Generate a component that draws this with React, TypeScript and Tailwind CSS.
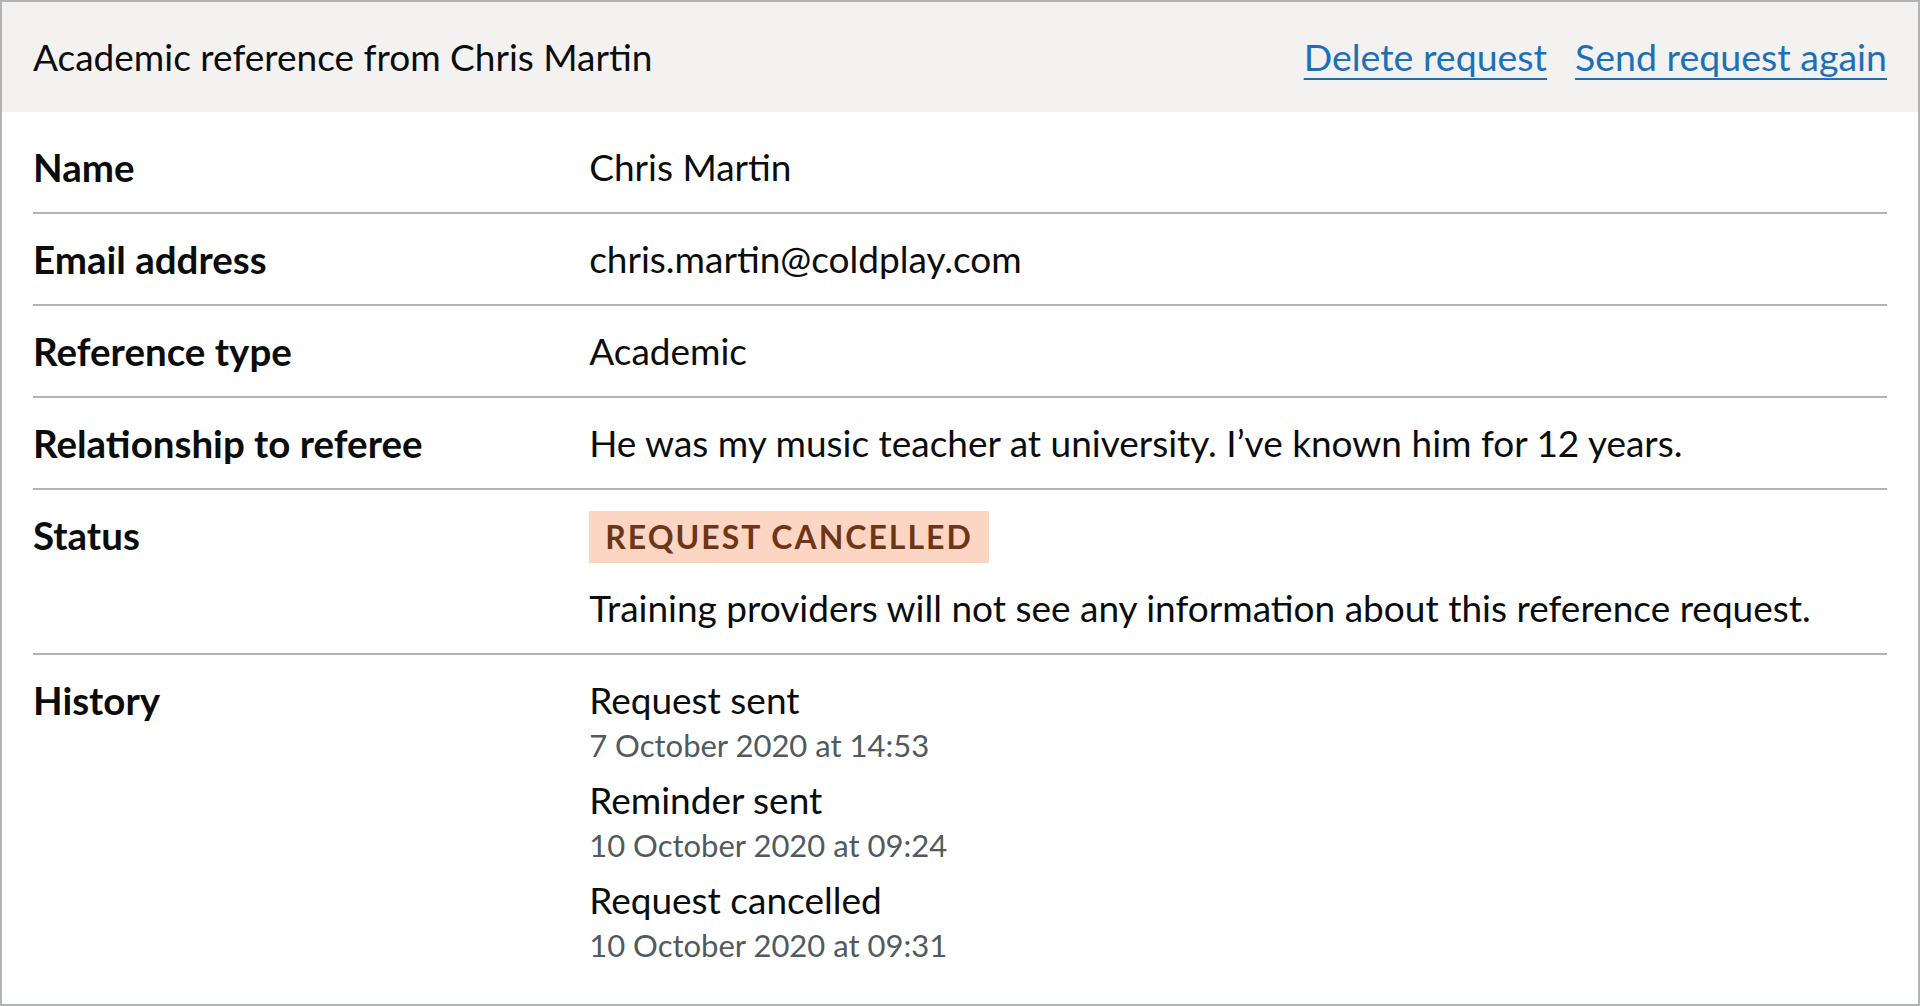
const font = "font-['Lato','Liberation_Sans',sans-serif]";

type Row = { key: string; value: React.ReactNode };

const history = [
  { event: 'Request sent', date: '7 October 2020 at 14:53' },
  { event: 'Reminder sent', date: '10 October 2020 at 09:24' },
  { event: 'Request cancelled', date: '10 October 2020 at 09:31' },
];

const rows: Row[] = [
  { key: 'Name', value: 'Chris Martin' },
  { key: 'Email address', value: 'chris.martin@coldplay.com' },
  { key: 'Reference type', value: 'Academic' },
  {
    key: 'Relationship to referee',
    value: 'He was my music teacher at university. I’ve known him for 12 years.',
  },
  {
    key: 'Status',
    value: (
      <>
        <div className="mb-[20px]">
          <strong className="inline-block h-[52px] bg-[#fcd6c3] px-[16px] text-[32px] font-bold uppercase leading-[52px] tracking-[2px] text-[#6e3619]">
            Request cancelled
          </strong>
        </div>
        <p>Training providers will not see any information about this reference request.</p>
      </>
    ),
  },
  {
    key: 'History',
    value: (
      <ol className="flex flex-col gap-[10px]">
        {history.map((h) => (
          <li key={h.event}>
            <div>{h.event}</div>
            <div className="text-[31px] leading-[40px] text-[#505a5f]">{h.date}</div>
          </li>
        ))}
      </ol>
    ),
  },
];

export default function App() {
  return (
    <div className={`${font} bg-white text-[#0b0c0c]`}>
      <section className="h-[1006px] border-2 border-[#b1b4b6]">
        <div className="flex h-[110px] items-center justify-between bg-[#f3f2f1] px-[31px]">
          <h2 className="text-[37px] leading-[50px]">Academic reference from Chris Martin</h2>
          <ul className="flex gap-[28px] text-[37.5px] leading-[50px]">
            <li>
              <a href="#" className="text-[#1d70b8] underline decoration-2 underline-offset-[7px]">
                Delete request
              </a>
            </li>
            <li>
              <a href="#" className="text-[#1d70b8] underline decoration-2 underline-offset-[7px]">
                Send request again
              </a>
            </li>
          </ul>
        </div>
        <dl className="px-[31px] pt-[10px] text-[37px] leading-[50px]">
          {rows.map((r, i) => (
            <div
              key={r.key}
              className={`grid grid-cols-[30%_1fr] ${i < rows.length - 1 ? 'border-b-2 border-[#b1b4b6]' : ''}`}
            >
              <dt className="py-[20px] pr-[20px] text-[38.5px] font-bold">{r.key}</dt>
              <dd className="py-[20px]">{r.value}</dd>
            </div>
          ))}
        </dl>
      </section>
    </div>
  );
}
